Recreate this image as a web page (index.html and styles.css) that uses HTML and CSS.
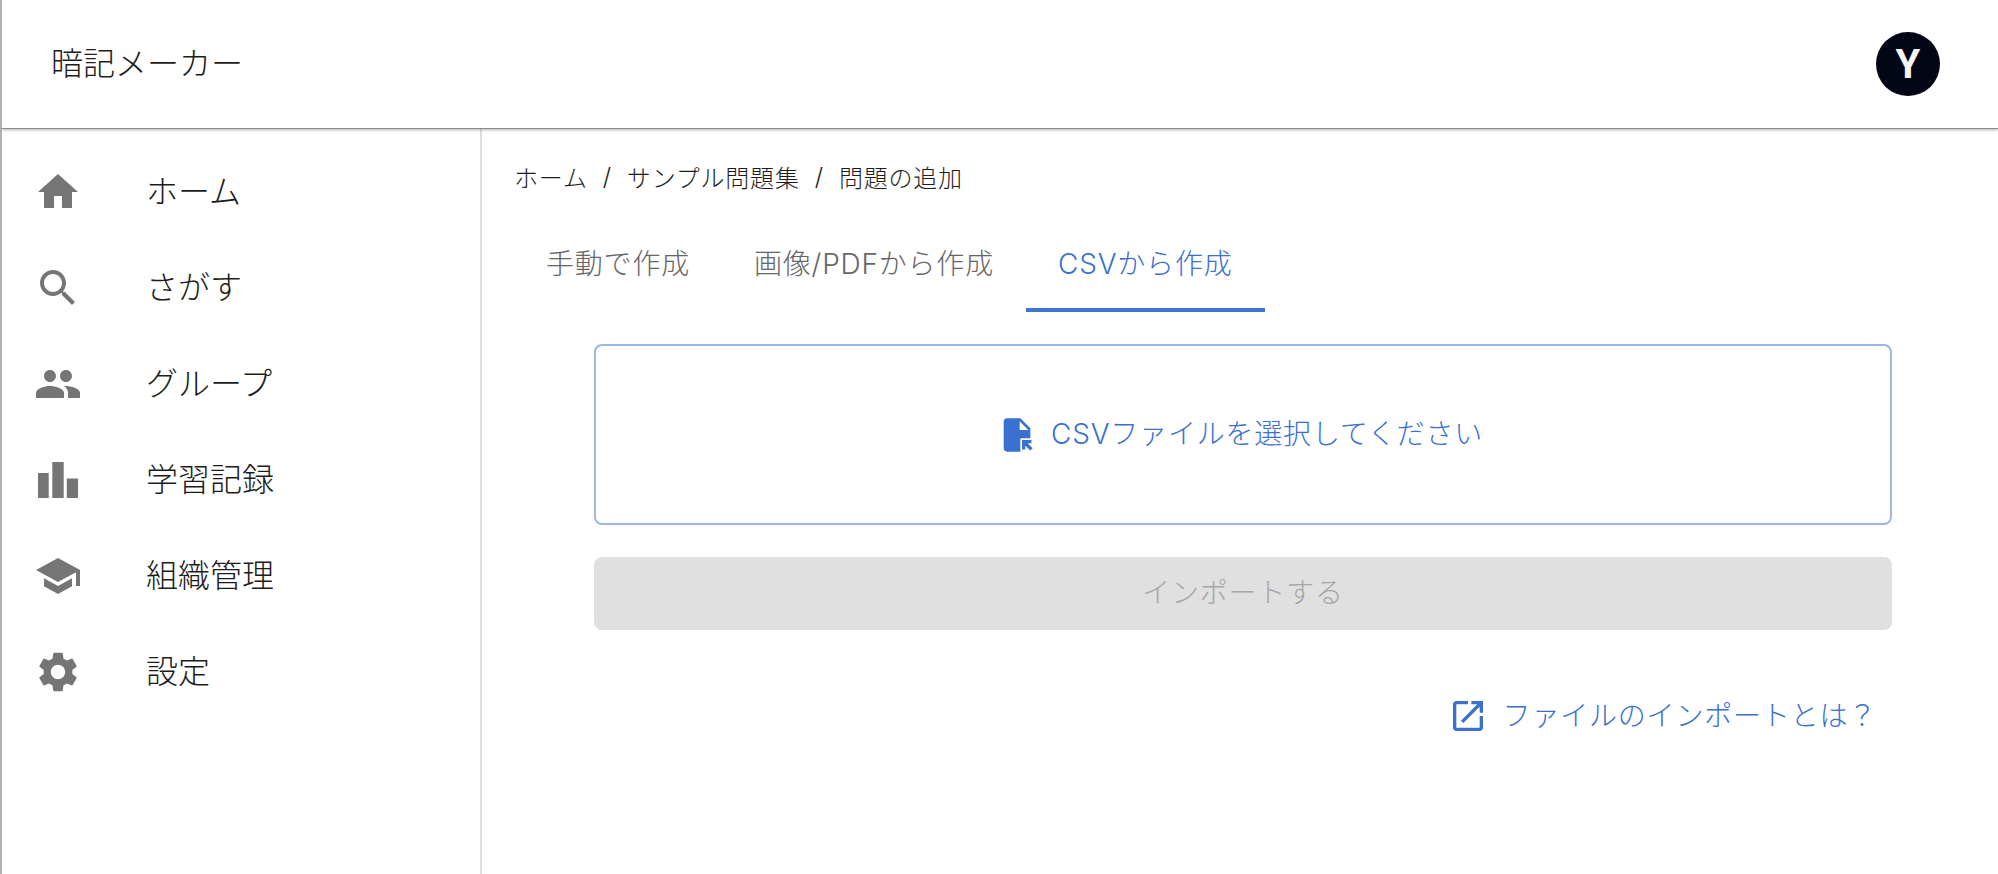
FILE: index.html
```html
<!DOCTYPE html>
<html lang="ja">
<head>
  <meta charset="UTF-8" />
  <title>暗記メーカー</title>
  <link rel="stylesheet" href="styles.css">
</head>
<body>
  <header class="app-bar">
    <div class="app-title">暗記メーカー</div>
    <div class="avatar">Y</div>
  </header>

  <div class="layout">
    <nav class="sidebar">
      <a class="nav-item">
        <svg class="icon nav-icon" viewBox="0 0 24 24"><path d="M10 20v-6h4v6h5v-8h3L12 3 2 12h3v8z"/></svg>
        <span>ホーム</span>
      </a>
      <a class="nav-item">
        <svg class="icon nav-icon" viewBox="0 0 24 24"><path d="M15.5 14h-.79l-.28-.27C15.41 12.59 16 11.11 16 9.5 16 5.91 13.09 3 9.5 3S3 5.91 3 9.5 5.91 16 9.5 16c1.61 0 3.09-.59 4.23-1.57l.27.28v.79l5 4.99L20.49 19l-4.99-5zm-6 0C7.01 14 5 11.99 5 9.5S7.01 5 9.5 5 14 7.01 14 9.5 11.99 14 9.5 14z"/></svg>
        <span>さがす</span>
      </a>
      <a class="nav-item">
        <svg class="icon nav-icon" viewBox="0 0 24 24"><path d="M16 11c1.66 0 2.99-1.34 2.99-3S17.66 5 16 5s-3 1.34-3 3 1.34 3 3 3zm-8 0c1.66 0 2.99-1.34 2.99-3S9.66 5 8 5 5 6.34 5 8s1.34 3 3 3zm0 2c-2.33 0-7 1.17-7 3.5V19h14v-2.5c0-2.33-4.67-3.5-7-3.5zm8 0c-.29 0-.62.02-.97.05 1.16.84 1.97 1.97 1.97 3.45V19h6v-2.5c0-2.33-4.67-3.5-7-3.5z"/></svg>
        <span>グループ</span>
      </a>
      <a class="nav-item">
        <svg class="icon nav-icon" viewBox="0 0 24 24"><path d="M2 8.5h5.35V21H2zM9.15 3h5.7v18h-5.7zM16.4 11.2H22V21h-5.6z"/></svg>
        <span>学習記録</span>
      </a>
      <a class="nav-item">
        <svg class="icon nav-icon" viewBox="0 0 24 24"><path d="M5 13.18v4L12 21l7-3.82v-4L12 17l-7-3.82zM12 3 1 9l11 6 9-4.91V17h2V9L12 3z"/></svg>
        <span>組織管理</span>
      </a>
      <a class="nav-item">
        <svg class="icon nav-icon" viewBox="0 0 24 24"><path d="M19.14 12.94c.04-.3.06-.61.06-.94 0-.32-.02-.64-.07-.94l2.03-1.58c.18-.14.23-.41.12-.61l-1.92-3.32c-.12-.22-.37-.29-.59-.22l-2.39.96c-.5-.38-1.03-.7-1.62-.94l-.36-2.54c-.04-.24-.24-.41-.48-.41h-3.84c-.24 0-.43.17-.47.41l-.36 2.54c-.59.24-1.13.57-1.62.94l-2.39-.96c-.22-.08-.47 0-.59.22L2.74 8.87c-.12.21-.08.47.12.61l2.03 1.58c-.05.3-.09.63-.09.94s.02.64.07.94l-2.03 1.58c-.18.14-.23.41-.12.61l1.92 3.32c.12.22.37.29.59.22l2.39-.96c.5.38 1.03.7 1.62.94l.36 2.54c.05.24.24.41.48.41h3.84c.24 0 .44-.17.47-.41l.36-2.54c.59-.24 1.13-.56 1.62-.94l2.39.96c.22.08.47 0 .59-.22l1.92-3.32c.12-.22.07-.47-.12-.61l-2.01-1.58zM12 15.6c-1.98 0-3.6-1.62-3.6-3.6s1.62-3.6 3.6-3.6 3.6 1.62 3.6 3.6-1.62 3.6-3.6 3.6z"/></svg>
        <span>設定</span>
      </a>
    </nav>

    <main class="content">
      <div class="breadcrumbs">
        <span>ホーム</span>
        <span class="crumb-sep">/</span>
        <span>サンプル問題集</span>
        <span class="crumb-sep">/</span>
        <span>問題の追加</span>
      </div>

      <div class="tabs">
        <div class="tab">手動で作成</div>
        <div class="tab">画像/PDFから作成</div>
        <div class="tab tab-active">CSVから作成</div>
      </div>

      <div class="import-form">
        <div class="dropzone">
          <svg class="icon file-icon" viewBox="0 0 24 24"><path fill-rule="evenodd" d="M14 2H6c-1.1 0-2 .9-2 2v16c0 1.1.9 2 2 2h8v-8h6V8l-6-6zm-.4 1.8V9h5.2z"/><path d="M15 15h5.66v2h-2.24l2.95 2.95-1.41 1.41L17 18.41v2.24h-2z"/></svg>
          <span class="dropzone-label">CSVファイルを選択してください</span>
        </div>
        <div class="import-button">インポートする</div>
        <div class="help-row">
          <a class="help-link">
            <svg class="icon help-icon" viewBox="0 0 24 24"><path d="M19 19H5V5h7V3H5c-1.11 0-2 .9-2 2v14c0 1.1.89 2 2 2h14c1.1 0 2-.9 2-2v-7h-2v7zM14 3v2h3.59l-9.83 9.83 1.41 1.41L19 6.41V10h2V3h-7z"/></svg>
            <span class="help-label">ファイルのインポートとは？</span>
          </a>
        </div>
      </div>
    </main>
  </div>
</body>
</html>
```

FILE: styles.css
```css
html, body {
  height: 100%;
}

body {
  margin: 0;
  font-family: "Inter", "Noto Sans CJK JP", sans-serif;
  font-weight: 300;
  color: #1c1c1c;
  background-color: #fff;
  border-left: 2px solid #b0b0b0;
  box-sizing: border-box;
  display: flex;
  flex-direction: column;
  overflow: hidden;
}

.icon {
  display: block;
  flex-shrink: 0;
  fill: currentColor;
}

/* header */
.app-bar {
  height: 128px;
  padding: 0 58px 0 49px;
  display: flex;
  align-items: center;
  justify-content: space-between;
  border-bottom: 1px solid #8c8c8c;
  box-shadow: 0 1px 3px rgba(0, 0, 0, 0.3);
  position: relative;
  font-size: 32px;
}

.app-title {
  padding-bottom: 6px;
}

.avatar {
  width: 64px;
  height: 64px;
  border-radius: 50%;
  background-color: #030614;
  color: #f5f5f5;
  font-family: "Roboto", sans-serif;
  font-size: 40px;
  font-weight: 700;
  display: flex;
  align-items: center;
  justify-content: center;
}

.layout {
  flex: 1;
  display: flex;
  min-height: 0;
}

/* sidebar */
.sidebar {
  width: 478px;
  padding-top: 15px;
  border-right: 2px solid #dedede;
  flex-shrink: 0;
}

.nav-item {
  height: 96px;
  padding-left: 32px;
  display: flex;
  align-items: center;
  font-size: 32px;
}

.nav-item span {
  padding-bottom: 6px;
}

.nav-icon {
  width: 48px;
  height: 48px;
  margin-right: 64px;
  color: #757575;
}

/* main area */
.content {
  flex: 1;
  padding: 32px 0 0 32px;
}

.breadcrumbs {
  height: 36px;
  display: flex;
  align-items: center;
  font-size: 24px;
  letter-spacing: 0.8px;
  padding-bottom: 5px;
  box-sizing: border-box;
}

.crumb-sep {
  margin: 0 15px;
}

.tabs {
  margin-top: 19px;
  display: flex;
}

.tab {
  height: 96px;
  padding: 0 32px 4px;
  display: flex;
  align-items: center;
  box-sizing: border-box;
  font-size: 28px;
  letter-spacing: 0.8px;
  color: #666;
}

.tab-active {
  color: #3a70cf;
  padding-bottom: 0;
  border-bottom: 4px solid #3f75d2;
}

.import-form {
  width: 1298px;
  margin: 32px 0 0 80px;
}

.dropzone {
  height: 181px;
  padding-right: 6px;
  border: 2px solid #9ab7e8;
  border-radius: 8px;
  box-sizing: border-box;
  display: flex;
  align-items: center;
  justify-content: center;
  gap: 14px;
  font-size: 28px;
  letter-spacing: 0.8px;
  color: #3a70cf;
}

.dropzone-label {
  padding-bottom: 5px;
}

.file-icon {
  width: 40px;
  height: 40px;
}

.import-button {
  height: 73px;
  margin-top: 32px;
  padding-bottom: 5px;
  border-radius: 8px;
  box-sizing: border-box;
  background-color: #e0e0e0;
  color: #a6a6a6;
  font-size: 28px;
  letter-spacing: 0.8px;
  display: flex;
  align-items: center;
  justify-content: center;
}

.help-row {
  margin-top: 64px;
  display: flex;
  justify-content: flex-end;
  padding-right: 15px;
}

.help-link {
  display: flex;
  align-items: center;
  gap: 15px;
  font-size: 28px;
  letter-spacing: 0.8px;
  color: #3a70cf;
}

.help-label {
  padding-bottom: 4px;
}

.help-icon {
  width: 40px;
  height: 40px;
}
```
